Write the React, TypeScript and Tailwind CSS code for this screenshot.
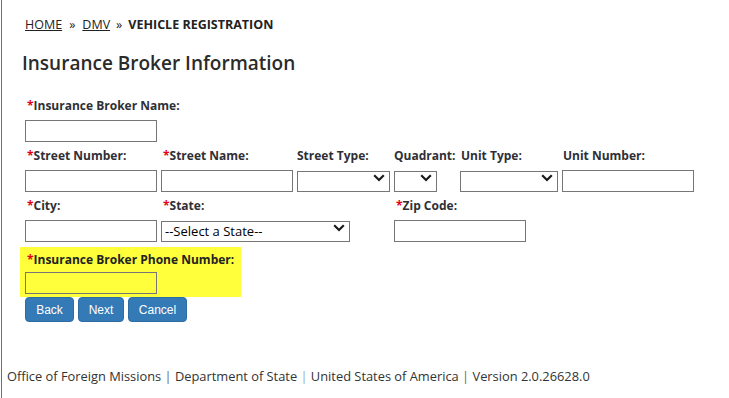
import React from "react";

const Star = () => <span className="text-[#e0001b]">*</span>;

function Label({ text, req, className = "h-[24px]" }: { text: string; req?: boolean; className?: string }) {
  return (
    <div className={`pt-[5px] text-[12px] font-bold leading-[16px] whitespace-nowrap ${className}`}>
      {req && <Star />}
      {text}
    </div>
  );
}

function TextBox({ w = "w-[132px] bg-white" }: { w?: string }) {
  return <input type="text" className={`${w} h-[22px] border border-[#767676] px-1 text-[12px] outline-none`} />;
}

function Select({ w, placeholder }: { w: string; placeholder?: string }) {
  return (
    <div className={`relative ${w} mt-px h-[21px]`}>
      <select className="h-full w-full appearance-none border border-[#767676] bg-white pl-[3px] text-[13px] leading-[19px] text-black outline-none">
        <option>{placeholder ?? ""}</option>
      </select>
      <svg
        className="pointer-events-none absolute right-[5px] top-[6px]"
        width="12"
        height="8"
        viewBox="0 0 12 8"
      >
        <path d="M1.2 1.2 L6 6 L10.8 1.2" fill="none" stroke="#1a1a1a" strokeWidth="2.2" />
      </svg>
    </div>
  );
}

export default function App() {
  return (
    <div className="min-h-[398px] w-full bg-white font-['Open_Sans',sans-serif] text-[#2f2f36]">
      <div className="ml-px flex min-h-[398px] flex-col border-l border-[#707070]">
        {/* breadcrumb */}
        <div className="pl-[23px] pt-[17px] text-[12.5px] leading-[16px] text-[#222]">
          <a href="#" className="underline">HOME</a>
          <span className="mx-[7px]">»</span>
          <a href="#" className="underline">DMV</a>
          <span className="mx-[6px]">»</span>
          <span className="font-bold">VEHICLE REGISTRATION</span>
        </div>

        <h1 className="mt-[16px] pl-[20px] text-[19px] font-semibold leading-[28px] text-[#2b2b2b]">
          Insurance Broker Information
        </h1>

        <div className="mt-[16px] pl-[23px]">
          {/* broker name */}
          <div className="h-[50px]">
            <Label text="Insurance Broker Name:" req className="h-[24px] pl-[2px]" />
            <TextBox />
          </div>

          {/* address row */}
          <div className="flex h-[50px]">
            <div className="w-[136px]">
              <Label text="Street Number:" req className="h-[24px] pl-[2px]" />
              <TextBox />
            </div>
            <div className="w-[136px]">
              <Label text="Street Name:" req className="h-[24px] pl-[2px]" />
              <TextBox />
            </div>
            <div className="w-[97px]">
              <Label text="Street Type:" />
              <Select w="w-[93px]" />
            </div>
            <div className="w-[66px]">
              <Label text="Quadrant:" />
              <Select w="w-[43px]" />
            </div>
            <div className="w-[102px]">
              <Label text="Unit Type:" className="h-[24px] pl-px" />
              <Select w="w-[98px]" />
            </div>
            <div>
              <Label text="Unit Number:" className="h-[24px] pl-px" />
              <TextBox />
            </div>
          </div>

          {/* city row */}
          <div className="flex h-[54px]">
            <div className="w-[136px]">
              <Label text="City:" req className="h-[24px] pl-[2px]" />
              <TextBox />
            </div>
            <div className="w-[233px]">
              <Label text="State:" req className="h-[24px] pl-[2px]" />
              <Select w="w-[189px]" placeholder="--Select a State--" />
            </div>
            <div>
              <Label text="Zip Code:" req className="h-[24px] pl-[2px]" />
              <TextBox />
            </div>
          </div>

          {/* phone, highlighted */}
          <div className="-ml-[5px] h-[50px] w-[221px] bg-[#ffff3c] pl-[5px]">
            <Label text="Insurance Broker Phone Number:" req className="h-[22px] pl-[2px] text-[#222]" />
            <TextBox w="w-[132px] bg-transparent" />
          </div>

          <div className="flex gap-[4px] font-['Liberation_Sans',Arial,sans-serif] text-[12px] text-white">
            <button className="h-[25px] w-[49px] rounded-[4px] border border-[#2e6da4] bg-[#337ab7]">Back</button>
            <button className="h-[25px] w-[46px] rounded-[4px] border border-[#2e6da4] bg-[#337ab7]">Next</button>
            <button className="h-[25px] w-[59px] rounded-[4px] border border-[#2e6da4] bg-[#337ab7]">Cancel</button>
          </div>
        </div>

        <div className="mt-[45px] pl-[5px] text-[12.85px] leading-[18px] text-[#333]">
          Office of Foreign Missions <span className="text-[#666]">|</span> Department of State{" "}
          <span className="text-[#9ab]">|</span> United States of America <span className="text-[#666]">|</span> Version
          2.0.26628.0
        </div>
      </div>
    </div>
  );
}
